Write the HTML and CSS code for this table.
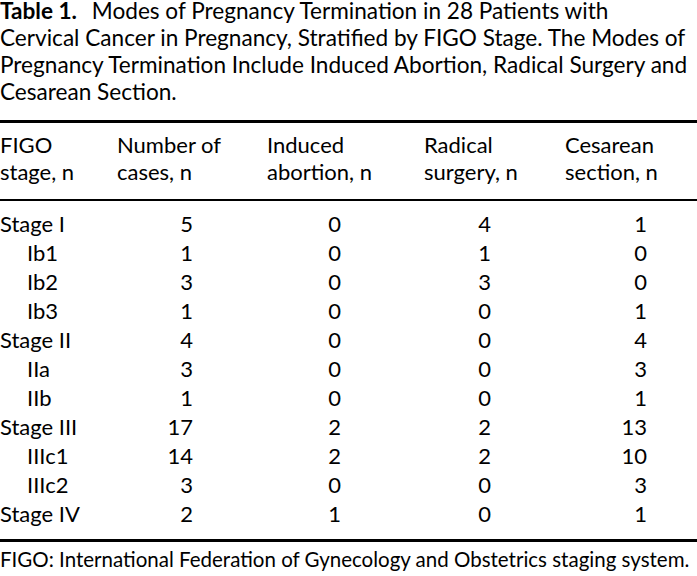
FILE: index.html
```html
<!DOCTYPE html>
<html lang="en">
<head>
<meta charset="utf-8">
<title>Table 1</title>
<link rel="stylesheet" href="styles.css">
</head>
<body>
<div class="page">
  <p class="caption"><b>Table 1.</b> Modes of Pregnancy Termination in 28 Patients with<br>Cervical Cancer in Pregnancy, Stratified by FIGO Stage. The Modes of<br>Pregnancy Termination Include Induced Abortion, Radical Surgery and<br>Cesarean Section.</p>
  <table class="data">
    <colgroup>
      <col class="w1"><col class="w2"><col class="w3"><col class="w4"><col class="w5">
    </colgroup>
    <thead>
      <tr>
        <th>FIGO<br>stage, n</th>
        <th>Number of<br>cases, n</th>
        <th>Induced<br>abortion, n</th>
        <th>Radical<br>surgery, n</th>
        <th>Cesarean<br>section, n</th>
      </tr>
    </thead>
    <tbody>
      <tr class="first"><td>Stage I</td><td class="c2">5</td><td class="c3">0</td><td class="c4">4</td><td class="c5">1</td></tr>
      <tr><td class="sub">Ib1</td><td class="c2">1</td><td class="c3">0</td><td class="c4">1</td><td class="c5">0</td></tr>
      <tr><td class="sub">Ib2</td><td class="c2">3</td><td class="c3">0</td><td class="c4">3</td><td class="c5">0</td></tr>
      <tr><td class="sub">Ib3</td><td class="c2">1</td><td class="c3">0</td><td class="c4">0</td><td class="c5">1</td></tr>
      <tr><td>Stage II</td><td class="c2">4</td><td class="c3">0</td><td class="c4">0</td><td class="c5">4</td></tr>
      <tr><td class="sub">IIa</td><td class="c2">3</td><td class="c3">0</td><td class="c4">0</td><td class="c5">3</td></tr>
      <tr><td class="sub">IIb</td><td class="c2">1</td><td class="c3">0</td><td class="c4">0</td><td class="c5">1</td></tr>
      <tr><td>Stage III</td><td class="c2">17</td><td class="c3">2</td><td class="c4">2</td><td class="c5">13</td></tr>
      <tr><td class="sub">IIIc1</td><td class="c2">14</td><td class="c3">2</td><td class="c4">2</td><td class="c5">10</td></tr>
      <tr><td class="sub">IIIc2</td><td class="c2">3</td><td class="c3">0</td><td class="c4">0</td><td class="c5">3</td></tr>
      <tr class="last"><td>Stage IV</td><td class="c2">2</td><td class="c3">1</td><td class="c4">0</td><td class="c5">1</td></tr>
    </tbody>
  </table>
  <p class="note">FIGO: International Federation of Gynecology and Obstetrics staging system.</p>
</div>
</body>
</html>
```

FILE: styles.css
```css
html, body {
  margin: 0;
  padding: 0;
  background: #fff;
}

body {
  font-family: Lato, "Noto Sans", sans-serif;
  font-size: 22px;
  color: #000;
  overflow: hidden;
}

.page {
  width: 697px;
}

.caption {
  margin: -3px 0 15px;
  font-size: 22.6px;
  line-height: 27px;
  white-space: nowrap;
}

.caption b {
  font-weight: 700;
  margin-right: 9px;
}

.data {
  width: 697px;
  border-collapse: collapse;
  table-layout: fixed;
  border-top: 3px solid #000;
  border-bottom: 3px solid #000;
}

.w1 { width: 117px; }
.w2 { width: 150px; }
.w3 { width: 157px; }
.w4 { width: 141px; }
.w5 { width: 132px; }

.data th {
  font-weight: 400;
  text-align: left;
  vertical-align: top;
  line-height: 27px;
  padding: 8px 0 14px;
  border-bottom: 2px solid #000;
  white-space: nowrap;
}

.data td {
  padding: 0;
  line-height: 29px;
  white-space: nowrap;
}

.data tr.first td {
  padding-top: 8px;
}

.data tr.last td {
  padding-bottom: 11px;
}

.data td.sub {
  padding-left: 27px;
}

.c2, .c3, .c4, .c5 {
  text-align: right;
}

.data td.c2 { padding-right: 74px; }
.data td.c3 { padding-right: 83px; }
.data td.c4 { padding-right: 74px; }
.data td.c5 { padding-right: 50px; }

.note {
  margin: 4px 0 0;
  font-size: 20.5px;
  line-height: 27px;
  white-space: nowrap;
}
```
